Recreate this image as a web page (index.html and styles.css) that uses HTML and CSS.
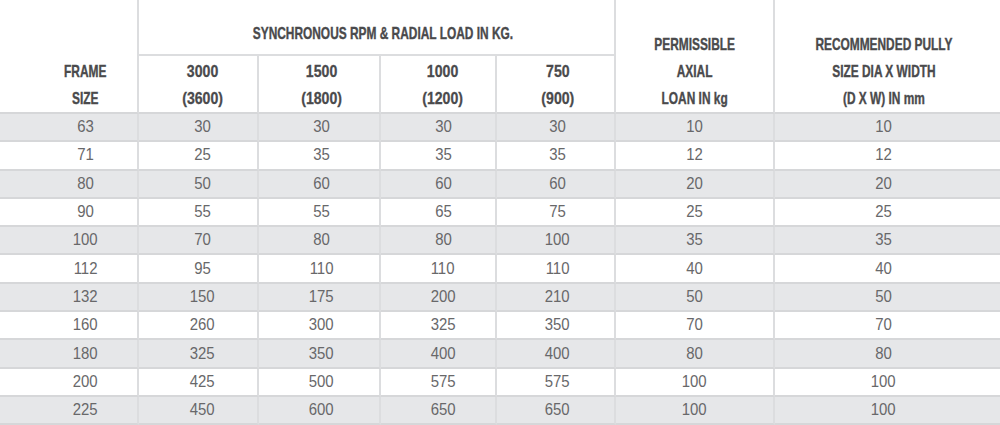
FILE: index.html
```html
<!DOCTYPE html>
<html lang="en">
<head>
<meta charset="utf-8">
<title>Radial load table</title>
<link rel="stylesheet" href="styles.css">
</head>
<body>
<table class="load-table">
  <colgroup>
    <col class="c1"><col class="c2"><col class="c3"><col class="c4"><col class="c5"><col class="c6"><col class="c7">
  </colgroup>
  <thead>
    <tr class="h1">
      <th rowspan="2" class="k1 bt"><span class="t w">FRAME<br>SIZE</span></th>
      <th colspan="4" class="sync"><span class="t w">SYNCHRONOUS RPM &amp; RADIAL LOAD IN KG.</span></th>
      <th rowspan="2" class="k6 bt"><span class="t w">PERMISSIBLE<br>AXIAL<br>LOAN IN kg</span></th>
      <th rowspan="2" class="k7 bt last"><span class="t w">RECOMMENDED PULLY<br>SIZE DIA X WIDTH<br>(D X W) IN mm</span></th>
    </tr>
    <tr class="h2">
      <th class="k2"><span class="t n">3000<br>(3600)</span></th>
      <th class="k3"><span class="t n">1500<br>(1800)</span></th>
      <th class="k4"><span class="t n">1000<br>(1200)</span></th>
      <th class="k5"><span class="t n">750<br>(900)</span></th>
    </tr>
  </thead>
  <tbody>
    <tr class="alt"><td class="k1"><span class="t v">63</span></td><td class="k2"><span class="t v">30</span></td><td class="k3"><span class="t v">30</span></td><td class="k4"><span class="t v">30</span></td><td class="k5"><span class="t v">30</span></td><td class="k6"><span class="t v">10</span></td><td class="k7 last"><span class="t v">10</span></td></tr>
    <tr><td class="k1"><span class="t v">71</span></td><td class="k2"><span class="t v">25</span></td><td class="k3"><span class="t v">35</span></td><td class="k4"><span class="t v">35</span></td><td class="k5"><span class="t v">35</span></td><td class="k6"><span class="t v">12</span></td><td class="k7 last"><span class="t v">12</span></td></tr>
    <tr class="alt"><td class="k1"><span class="t v">80</span></td><td class="k2"><span class="t v">50</span></td><td class="k3"><span class="t v">60</span></td><td class="k4"><span class="t v">60</span></td><td class="k5"><span class="t v">60</span></td><td class="k6"><span class="t v">20</span></td><td class="k7 last"><span class="t v">20</span></td></tr>
    <tr><td class="k1"><span class="t v">90</span></td><td class="k2"><span class="t v">55</span></td><td class="k3"><span class="t v">55</span></td><td class="k4"><span class="t v">65</span></td><td class="k5"><span class="t v">75</span></td><td class="k6"><span class="t v">25</span></td><td class="k7 last"><span class="t v">25</span></td></tr>
    <tr class="alt"><td class="k1"><span class="t v">100</span></td><td class="k2"><span class="t v">70</span></td><td class="k3"><span class="t v">80</span></td><td class="k4"><span class="t v">80</span></td><td class="k5"><span class="t v">100</span></td><td class="k6"><span class="t v">35</span></td><td class="k7 last"><span class="t v">35</span></td></tr>
    <tr><td class="k1"><span class="t v">112</span></td><td class="k2"><span class="t v">95</span></td><td class="k3"><span class="t v">110</span></td><td class="k4"><span class="t v">110</span></td><td class="k5"><span class="t v">110</span></td><td class="k6"><span class="t v">40</span></td><td class="k7 last"><span class="t v">40</span></td></tr>
    <tr class="alt"><td class="k1"><span class="t v">132</span></td><td class="k2"><span class="t v">150</span></td><td class="k3"><span class="t v">175</span></td><td class="k4"><span class="t v">200</span></td><td class="k5"><span class="t v">210</span></td><td class="k6"><span class="t v">50</span></td><td class="k7 last"><span class="t v">50</span></td></tr>
    <tr><td class="k1"><span class="t v">160</span></td><td class="k2"><span class="t v">260</span></td><td class="k3"><span class="t v">300</span></td><td class="k4"><span class="t v">325</span></td><td class="k5"><span class="t v">350</span></td><td class="k6"><span class="t v">70</span></td><td class="k7 last"><span class="t v">70</span></td></tr>
    <tr class="alt"><td class="k1"><span class="t v">180</span></td><td class="k2"><span class="t v">325</span></td><td class="k3"><span class="t v">350</span></td><td class="k4"><span class="t v">400</span></td><td class="k5"><span class="t v">400</span></td><td class="k6"><span class="t v">80</span></td><td class="k7 last"><span class="t v">80</span></td></tr>
    <tr><td class="k1"><span class="t v">200</span></td><td class="k2"><span class="t v">425</span></td><td class="k3"><span class="t v">500</span></td><td class="k4"><span class="t v">575</span></td><td class="k5"><span class="t v">575</span></td><td class="k6"><span class="t v">100</span></td><td class="k7 last"><span class="t v">100</span></td></tr>
    <tr class="alt"><td class="k1"><span class="t v">225</span></td><td class="k2"><span class="t v">450</span></td><td class="k3"><span class="t v">600</span></td><td class="k4"><span class="t v">650</span></td><td class="k5"><span class="t v">650</span></td><td class="k6"><span class="t v">100</span></td><td class="k7 last"><span class="t v">100</span></td></tr>
  </tbody>
</table>
</body>
</html>
```

FILE: styles.css
```css
html, body {
  margin: 0;
  padding: 0;
  background: #ffffff;
}

.load-table {
  width: 1000px;
  table-layout: fixed;
  border-collapse: separate;
  border-spacing: 0;
  font-family: "Liberation Sans", Arial, sans-serif;
}

.c1 { width: 139px; }
.c2 { width: 120px; }
.c3 { width: 122px; }
.c4 { width: 116px; }
.c5 { width: 119px; }
.c6 { width: 159px; }
.c7 { width: 225px; }

.load-table th,
.load-table td {
  box-sizing: border-box;
  padding: 0;
  text-align: center;
  white-space: nowrap;
  border-right: 2px solid #dcdddf;
}

.load-table .last {
  border-right: none;
}

.load-table th {
  font-weight: bold;
  font-size: 17px;
  line-height: 27px;
  color: #4a4a4c;
  vertical-align: bottom;
}

.h1 th { height: 56px; }
.h2 th { height: 58px; line-height: 26.5px; }

.load-table th.sync {
  border-bottom: 2px solid #dcdddf;
  padding-bottom: 7px;
  padding-left: 13px;
}

.bt,
.h2 th {
  border-bottom: 2px solid #d6d7d9;
}

.load-table td {
  height: 28.3px;
  font-size: 17px;
  line-height: 26px;
  color: #68686a;
  vertical-align: middle;
  border-bottom: 2px solid #d6d7d9;
}

.load-table tr.alt td {
  background: #e6e7e9;
}

/* condensed-face emulation */
.t {
  display: inline-block;
  transform-origin: 50% 50%;
}
.w {
  transform: scaleX(0.70);
  -webkit-text-stroke: 0.4px currentColor;
}
.n {
  transform: scaleX(0.83);
  -webkit-text-stroke: 0.3px currentColor;
}
.v { transform: scaleX(0.88); }

.load-table .k1 { padding-left: 34px; }
.load-table .k2 { padding-left: 9px; }
.load-table .k3 { padding-left: 5px; }
.load-table .k4 { padding-left: 10px; }
.load-table .k5 { padding-left: 4px; }
.load-table .k7 { padding-right: 8px; }
```
